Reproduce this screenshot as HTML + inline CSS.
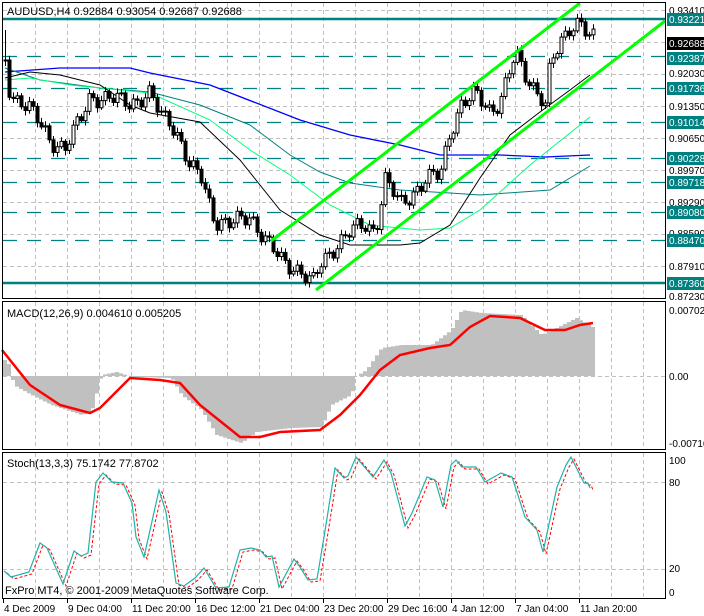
<!DOCTYPE html>
<html><head><meta charset="utf-8"><style>
html,body{margin:0;padding:0;background:#fff;}
svg{display:block;font-family:"Liberation Sans",sans-serif;font-size:11px;}
.ax{font-size:10px;}
</style></head><body>
<svg id="s" width="704" height="616" viewBox="0 0 704 616" xmlns="http://www.w3.org/2000/svg">
<rect width="704" height="616" fill="#fff"/>
<g id="grid" stroke="#c0c0c0" stroke-dasharray="4,3" stroke-width="1"></g>
<g id="hl"></g>
<g id="ma" fill="none"></g>
<g id="candles"></g>
<g id="chan" stroke="#00ff00" stroke-width="3">
<line x1="271" y1="241" x2="580" y2="3"/>
<line x1="316" y1="290" x2="665" y2="21"/>
</g>
<g id="macd"></g>
<g id="stoch" fill="none"></g>
<g fill="none" stroke="#000" stroke-width="1">
<rect x="2.5" y="2.5" width="663" height="296"/>
<rect x="2.5" y="301.5" width="663" height="148"/>
<rect x="2.5" y="452.5" width="663" height="146"/>
</g>
<g id="labels" class="ax"></g>
<text x="7" y="15" fill="#000">AUDUSD,H4  0.92884 0.93054 0.92687 0.92688</text>
<text x="7" y="317" fill="#000">MACD(12,26,9) 0.004610 0.005205</text>
<text x="7" y="467" fill="#000">Stoch(13,3,3) 75.1742 77.8702</text>
<text x="5" y="594" fill="#000">FxPro MT4, © 2001-2009 MetaQuotes Software Corp.</text>
</svg>
<script>
(function(){
var NS="http://www.w3.org/2000/svg";
function el(p,t,a,txt){var e=document.createElementNS(NS,t);for(var k in a)e.setAttribute(k,a[k]);if(txt!=null)e.textContent=txt;document.getElementById(p).appendChild(e);return e;}
function interp(pts,x){if(x<=pts[0][0])return pts[0][1];for(var i=1;i<pts.length;i++){if(x<=pts[i][0]){var a=pts[i-1],b=pts[i];return a[1]+(b[1]-a[1])*(x-a[0])/(b[0]-a[0]);}}return pts[pts.length-1][1];}
function poly(p,pts,attrs){attrs.points=pts.map(function(q){return q[0]+","+q[1]}).join(" ");el(p,"polyline",attrs);}
for(var x=35;x<666;x+=32){el("grid","line",{x1:x+.5,y1:3,x2:x+.5,y2:298});el("grid","line",{x1:x+.5,y1:302,x2:x+.5,y2:449});el("grid","line",{x1:x+.5,y1:453,x2:x+.5,y2:598});}
for(var y=10;y<298;y+=32){el("grid","line",{x1:3,y1:y+.5,x2:665,y2:y+.5});}
el("grid","line",{x1:3,y1:376.5,x2:665,y2:376.5});
el("grid","line",{x1:3,y1:482.5,x2:665,y2:482.5});
el("grid","line",{x1:3,y1:569.5,x2:665,y2:569.5});
var dl=[56,88,122,158,182,212,240];
dl.forEach(function(y){el("hl","line",{x1:3,y1:y+.5,x2:665,y2:y+.5,stroke:"#008080","stroke-width":1.3,"stroke-dasharray":"14,10"});});
[19,283].forEach(function(y){el("hl","line",{x1:3,y1:y,x2:665,y2:y,stroke:"#008080","stroke-width":2.5});});
poly("ma",[[5,72],[60,68],[130,68],[150,73],[210,85],[300,120],[350,135],[400,145],[440,155],[500,155],[545,157],[590,155]],{stroke:"#0000ff","stroke-width":1.3});
poly("ma",[[5,68],[40,80],[100,88],[150,92],[200,105],[250,125],[290,155],[320,172],[350,183],[400,190],[450,193],[480,195],[550,190],[590,166]],{stroke:"#008080"});
poly("ma",[[5,80],[30,78],[70,85],[120,90],[150,93],[210,120],[250,150],[290,175],[330,205],[370,225],[420,230],[450,228],[480,210],[530,165],[590,117]],{stroke:"#00ff7f"});
poly("ma",[[5,78],[30,72],[60,75],[100,85],[130,105],[150,113],[200,122],[240,160],[280,210],[320,235],[350,245],[400,245],[420,243],[450,225],[480,178],[510,135],[540,112],[570,90],[590,75]],{stroke:"#000"});
var path=[[5,60],[10,95],[20,100],[30,110],[50,140],[65,148],[80,120],[90,95],[100,98],[115,100],[130,102],[150,95],[160,115],[170,120],[180,140],[190,170],[200,175],[215,220],[230,225],[250,215],[265,240],[280,260],[300,270],[312,285],[320,265],[335,245],[350,232],[365,225],[375,230],[385,180],[400,205],[410,195],[425,180],[440,175],[450,130],[460,105],[475,95],[490,110],[500,100],[515,55],[525,75],[540,95],[545,105],[550,65],[560,45],[570,25],[580,20],[590,40]];
var prev=interp(path,4);
for(var i=0;i<148;i++){var cx=5+i*4;var c=interp(path,cx)+7*Math.sin(i*1.7)+4*Math.sin(i*0.63);var o=prev;prev=c;
var tp=Math.min(o,c),bt=Math.max(o,c);if(bt-tp<1){bt=tp+1;}
var hi=tp-2-3*Math.abs(Math.sin(i*2.3)),lo=bt+2+3*Math.abs(Math.cos(i*1.9));
if(i==0){hi=30;}
if(lo>288)lo=288;
el("candles","line",{x1:cx+.5,y1:hi,x2:cx+.5,y2:lo,stroke:"#000"});
el("candles","rect",{x:cx-1,y:tp,width:3,height:bt-tp,fill:(c>o?"#000":"#fff"),stroke:"#000","stroke-width":1});}
var hist=[[3,360],[8,365],[12,385],[30,395],[50,405],[80,415],[90,412],[100,375],[115,372],[130,377],[170,378],[180,395],[200,410],[215,435],[230,440],[240,443],[255,432],[290,428],[320,427],[330,405],[350,395],[355,376],[365,370],[380,348],[400,345],[430,345],[450,330],[460,310],[480,313],[520,315],[530,325],[540,335],[555,328],[575,318],[593,328]];
for(var x=3;x<=593;x+=4){var v=interp(hist,x);el("macd","rect",{x:x,y:Math.min(v,376),width:4,height:Math.abs(v-376),fill:"#c0c0c0"});}
poly("macd",[[2,350],[30,385],[60,405],[90,413],[100,408],[130,378],[160,380],[180,383],[200,405],[240,437],[260,437],[280,432],[320,430],[340,415],[360,395],[380,370],[400,355],[430,348],[450,345],[470,327],[490,316],[520,318],[545,330],[565,330],[580,325],[593,323]],{stroke:"#ff0000","stroke-width":2.5,fill:"none"});
var st=[[4,571],[11,577],[29,572],[40,543],[47,548],[63,584],[74,551],[81,556],[88,553],[96,482],[103,473],[112,482],[123,483],[132,503],[136,537],[144,557],[159,490],[166,512],[176,583],[184,586],[195,578],[204,568],[216,588],[229,587],[240,550],[251,548],[260,550],[266,557],[272,556],[279,587],[294,559],[300,567],[308,580],[317,579],[324,537],[335,468],[344,478],[348,476],[356,457],[373,477],[384,460],[391,473],[405,526],[412,513],[427,477],[435,480],[443,507],[451,465],[456,460],[462,467],[476,467],[485,482],[501,473],[512,477],[525,517],[537,530],[543,552],[557,487],[566,465],[571,457],[584,483],[588,483],[590,488]];
poly("stoch",st.map(function(p){return[p[0]+3,p[1]+2]}),{stroke:"#ff0000","stroke-dasharray":"3,2"});
poly("stoch",st,{stroke:"#20b2aa","stroke-width":1.2});
function lab(y,t,bg){if(bg){el("labels","rect",{x:667,y:y-6,width:37,height:13,fill:bg});el("labels","text",{x:669,y:y+4,fill:"#fff"},t);}else el("labels","text",{x:669,y:y+4,fill:"#000"},t);}
[[10,"0.93410"],[73,"0.92030"],[106,"0.91350"],[138,"0.90650"],[170,"0.89970"],[202,"0.89290"],[233,"0.88590"],[266,"0.87910"],[296,"0.87230"]].forEach(function(a){lab(a[0],a[1]);});
[[19,"0.93221"],[58,"0.92387"],[88,"0.91736"],[122,"0.91014"],[158,"0.90228"],[182,"0.89718"],[212,"0.89080"],[240,"0.88470"],[283,"0.87360"]].forEach(function(a){lab(a[0],a[1],"#008080");});
lab(43,"0.92688","#000");
lab(310,"0.00702");lab(376,"0.00");lab(443,"-0.00716");
lab(460,"100");lab(482,"80");lab(568,"20");lab(592,"0");
[[3,"4 Dec 2009"],[67,"9 Dec 04:00"],[131,"11 Dec 20:00"],[195,"16 Dec 12:00"],[259,"21 Dec 04:00"],[323,"23 Dec 20:00"],[387,"29 Dec 16:00"],[451,"4 Jan 12:00"],[515,"7 Jan 04:00"],[579,"11 Jan 20:00"]].forEach(function(a){el("labels","line",{x1:a[0]+.5,y1:599,x2:a[0]+.5,y2:603,stroke:"#000"});el("labels","text",{x:a[0]+1,y:612,fill:"#000"},a[1]);});
})();
</script>
</body></html>
